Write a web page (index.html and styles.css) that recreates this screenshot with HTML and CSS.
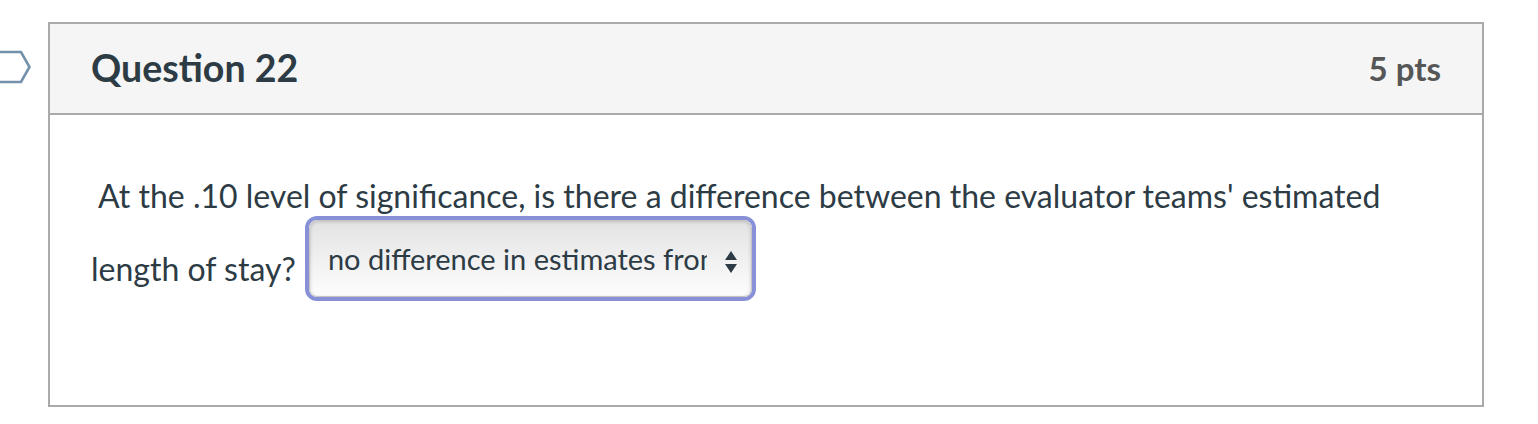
FILE: index.html
```html
<!DOCTYPE html>
<html>
<head>
<meta charset="utf-8">
<link rel="stylesheet" href="styles.css">
</head>
<body>
<div class="page">
  <div class="gutter">
    <svg class="flag" width="34" height="36" viewBox="0 0 34 36">
      <path d="M-10 3 H21 L29.5 18 L21 33 H-10" fill="none" stroke="#7391ab" stroke-width="2.6" stroke-linejoin="miter"/>
    </svg>
  </div>
  <div class="question">
    <div class="q-header">
      <h2 class="q-title">Question 22</h2>
      <div class="q-pts">5 pts</div>
    </div>
    <div class="q-body">
      <p class="q-text">&nbsp;At the .10 level of significance, is there a difference between the evaluator teams' estimated length of stay? <span class="ring"><span class="select"><span class="select-text">no difference in estimates from evaluators</span><svg class="arrows" width="12" height="22" viewBox="0 0 12 22"><path d="M6 0 L12 9 H0 Z" fill="#2d3b45"/><path d="M0 13 H12 L6 22 Z" fill="#2d3b45"/></svg></span></span></p>
    </div>
  </div>
</div>
</body>
</html>
```

FILE: styles.css
```css
* { box-sizing: border-box; }
html, body { margin: 0; padding: 0; background: #fff; }
body {
  font-family: Lato, "Open Sans", sans-serif;
  color: #2d3b45;
  width: 1538px;
  height: 424px;
  overflow: hidden;
}
.page {
  display: flex;
  padding-top: 22px;
}
.gutter {
  width: 48px;
  flex: none;
  padding-top: 27px;
}
.flag { display: block; }
.question {
  width: 1436px;
  border: 2px solid #aaaaaa;
  flex: none;
}
.q-header {
  height: 91px;
  background: #f5f5f5;
  border-bottom: 2px solid #aaaaaa;
  display: flex;
  align-items: center;
  justify-content: space-between;
  padding: 0 41px 0 41px;
}
.q-title {
  margin: 0;
  font-size: 37.5px;
  font-weight: 700;
  color: #2d3b45;
  padding-bottom: 2px;
}
.q-pts {
  font-size: 33px;
  font-weight: 700;
  color: #565656;
  padding-bottom: 2px;
}
.q-body {
  height: 290px;
  padding: 61px 41px 0 41px;
}
.q-text {
  margin: 0;
  font-size: 32px;
  line-height: 40px;
}
.ring {
  display: inline-block;
  vertical-align: middle;
  border: 4px solid #8891d8;
  border-radius: 12px;
  margin-left: 1px;
  margin-bottom: 29px;
}
.select {
  display: flex;
  align-items: center;
  width: 443px;
  height: 77px;
  border: 1px solid #c4c4c4;
  border-radius: 8px;
  background: linear-gradient(#e3e3e3, #fdfdfd);
  box-shadow: inset 0 2px 3px rgba(0,0,0,0.08), inset 2px 0 3px rgba(0,0,0,0.05), inset -2px 0 3px rgba(0,0,0,0.05);
  padding: 0 14px 0 18px;
  font-size: 29px;
  line-height: 36px;
  color: #2d3b45;
}
.select-text {
  flex: 1;
  white-space: nowrap;
  overflow: hidden;
}
.arrows {
  flex: none;
  margin-left: 18px;
  margin-top: 6px;
}
```
